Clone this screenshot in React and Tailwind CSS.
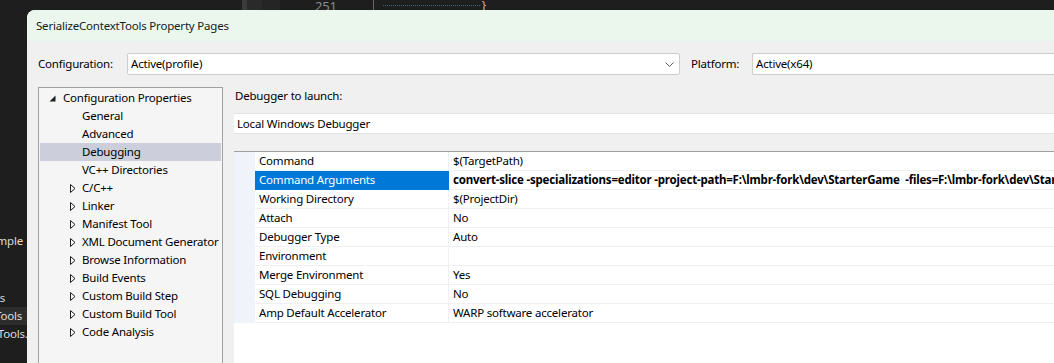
import React from 'react';

const treeItems = [
  { label: 'General' },
  { label: 'Advanced' },
  { label: 'Debugging', selected: true },
  { label: 'VC++ Directories' },
  { label: 'C/C++', expandable: true },
  { label: 'Linker', expandable: true },
  { label: 'Manifest Tool', expandable: true },
  { label: 'XML Document Generator', expandable: true },
  { label: 'Browse Information', expandable: true },
  { label: 'Build Events', expandable: true },
  { label: 'Custom Build Step', expandable: true },
  { label: 'Custom Build Tool', expandable: true },
  { label: 'Code Analysis', expandable: true },
];

const properties = [
  { name: 'Command', value: '$(TargetPath)' },
  {
    name: 'Command Arguments',
    value:
      'convert-slice -specializations=editor -project-path=F:\\lmbr-fork\\dev\\StarterGame  -files=F:\\lmbr-fork\\dev\\StarterGame\\Levels',
    selected: true,
  },
  { name: 'Working Directory', value: '$(ProjectDir)' },
  { name: 'Attach', value: 'No' },
  { name: 'Debugger Type', value: 'Auto' },
  { name: 'Environment', value: '' },
  { name: 'Merge Environment', value: 'Yes' },
  { name: 'SQL Debugging', value: 'No' },
  { name: 'Amp Default Accelerator', value: 'WARP software accelerator' },
];

function ComboBox({ text, className, chevron }) {
  return (
    <div
      className={`h-[22px] bg-white border border-[#cdcdcd] rounded-[2px] flex items-center pl-[3px] pr-[5px] ${className}`}
    >
      <span className="flex-1 whitespace-nowrap">{text}</span>
      {chevron && (
        <svg width="9" height="5" viewBox="0 0 9 5" className="shrink-0">
          <path d="M0.5 0.5 L4.5 4.5 L8.5 0.5" fill="none" stroke="#5f5f5f" strokeWidth="1" />
        </svg>
      )}
    </div>
  );
}

function ExpandedArrow() {
  return (
    <svg width="7" height="7" viewBox="0 0 7 7" className="shrink-0">
      <polygon points="6.5,0.5 6.5,6.5 0.5,6.5" fill="#1e1e1e" />
    </svg>
  );
}

function CollapsedArrow() {
  return (
    <svg width="6" height="9" viewBox="0 0 6 9" className="shrink-0">
      <polygon points="0.5,0.5 5,4.5 0.5,8.5" fill="none" stroke="#1e1e1e" strokeWidth="1" />
    </svg>
  );
}

export default function App() {
  return (
    <div className="w-[1054px] h-[363px] bg-[#1e1e1e] flex overflow-hidden text-[11.5px] tracking-[-0.2px] font-['Segoe_UI','Noto_Sans',sans-serif] text-black">
      {/* Solution explorer peeking out on the left */}
      <div className="w-[27px] shrink-0 flex flex-col text-[#dcdcdc] overflow-hidden">
        <div className="mt-[232px] h-[18px] leading-[18px] flex justify-end pr-[4px] whitespace-nowrap">Example</div>
        <div className="mt-[39px] h-[18px] leading-[18px] flex justify-end pr-[22px] whitespace-nowrap">Tests</div>
        <div className="h-[18px] leading-[18px] flex justify-end pr-[5px] whitespace-nowrap bg-[#2d2d2d]">Tools</div>
        <div className="h-[18px] leading-[18px] flex justify-end -mr-[6px] whitespace-nowrap">Tools.c</div>
      </div>

      <div className="flex-1 flex flex-col min-w-0">
        {/* Editor line behind the dialog */}
        <div className="h-[10px] shrink-0 overflow-hidden flex items-start">
          <div className="ml-[215px] w-[5px] h-[10px] bg-[#3a3a3a]" />
          <div className="w-[15px] h-[10px] bg-[#2a2a2a]" />
          <div className="w-[18px] h-[10px] bg-[#252526]" />
          <span className="ml-[35px] leading-[13px] text-[13px] text-[#8a8a8a]">251</span>
          <div className="ml-[36px] w-[1px] h-[10px] bg-[#6a6a6a]" />
          <div className="ml-[9px] mt-[5px] w-[97px] border-t border-dotted border-[#2f6f7f]" />
          <span className="ml-[2px] leading-[10px] text-[#d7ba7d]">}</span>
        </div>

        {/* Property pages dialog */}
        <div className="flex-1 flex flex-col bg-[#f0f0f0] rounded-tl-[8px] overflow-hidden min-h-0">
          <div className="h-[31px] shrink-0 bg-[#ebf6ed] flex items-center pl-[9px] text-[#1a1a1a]">
            SerializeContextTools Property Pages
          </div>

          <div className="flex items-center mt-[12px] pl-[11px] shrink-0">
            <span className="w-[89px] whitespace-nowrap">Configuration:</span>
            <ComboBox text="Active(profile)" className="w-[553px]" chevron />
            <span className="ml-[11px] w-[61px] whitespace-nowrap">Platform:</span>
            <ComboBox text="Active(x64)" className="flex-1 border-r-0 rounded-r-none" />
          </div>

          <div className="flex flex-1 mt-[12px] pl-[11px] min-h-0">
            {/* Category tree */}
            <div className="w-[185px] shrink-0 border border-b-0 border-[#a0a0a0] bg-[#f5f5f5] pt-[1px] px-[1px]">
              <div className="h-[18px] flex items-center pl-[9px] gap-[7px]">
                <ExpandedArrow />
                <span className="whitespace-nowrap">Configuration Properties</span>
              </div>
              {treeItems.map((item) => (
                <div
                  key={item.label}
                  className={`h-[18px] flex items-center pl-[30px] ${item.selected ? 'bg-[#cccedb]' : ''}`}
                >
                  <div className="w-[12px] shrink-0 flex">{item.expandable && <CollapsedArrow />}</div>
                  <span className="whitespace-nowrap">{item.label}</span>
                </div>
              ))}
            </div>

            {/* Property panel */}
            <div className="flex-1 ml-[11px] flex flex-col min-w-0">
              <div className="h-[18px] leading-[18px] pl-[1px]">Debugger to launch:</div>
              <div className="mt-[8px] h-[21px] bg-white border-y border-[#e3e3e3] flex items-center pl-[3px]">
                Local Windows Debugger
              </div>
              <div className="mt-[17px] flex-1 bg-white border-t border-[#a0a0a0]">
                {properties.map((p) => (
                  <div key={p.name} className="h-[19px] flex">
                    <div className="w-[21px] shrink-0 bg-[#f0f3f9]" />
                    <div
                      className={`w-[194px] shrink-0 flex items-center pl-[4px] border-b border-r whitespace-nowrap ${
                        p.selected ? 'bg-[#0078d7] text-white border-[#0078d7]' : 'border-[#eef0f4]'
                      }`}
                    >
                      {p.name}
                    </div>
                    <div
                      className={`flex-1 min-w-0 flex items-center pl-[4px] border-b border-[#eef0f4] whitespace-pre overflow-hidden ${
                        p.selected ? 'font-bold' : ''
                      }`}
                    >
                      {p.value}
                    </div>
                  </div>
                ))}
              </div>
            </div>
          </div>
        </div>
      </div>
    </div>
  );
}
